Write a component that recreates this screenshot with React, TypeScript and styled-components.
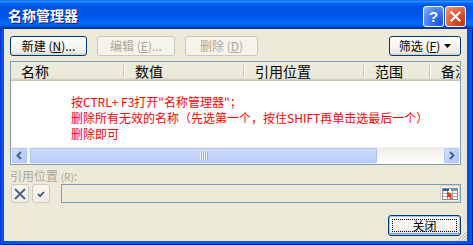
import React from "react";
import styled, { createGlobalStyle } from "styled-components";

const GlobalStyle = createGlobalStyle`
  *, *::before, *::after { box-sizing: border-box; }
  html, body { margin: 0; padding: 0; }
  body {
    width: 473px;
    height: 245px;
    overflow: hidden;
    background: #0054E3;
    font-family: "Noto Sans CJK SC", "Noto Sans", "Liberation Sans", sans-serif;
    font-size: 12px;
  }
`;

const Window = styled.div`
  width: 473px;
  height: 245px;
  display: flex;
  flex-direction: column;
  overflow: hidden;
`;

const TitleBar = styled.div`
  height: 29px;
  flex: none;
  display: flex;
  align-items: flex-start;
  padding: 0 7px 0 8px;
  background: linear-gradient(
    180deg,
    #0058ee 0%,
    #3593ff 4%,
    #288eff 6%,
    #127dff 8%,
    #036ffc 10%,
    #0262ee 14%,
    #0057e5 20%,
    #0054e3 24%,
    #0055eb 56%,
    #005bf5 66%,
    #026afe 76%,
    #0062ef 86%,
    #0052d6 92%,
    #0040ab 94%,
    #003092 100%
  );
`;

const Title = styled.div`
  flex: 1;
  color: #fff;
  font-weight: 700;
  font-size: 14px;
  line-height: 16px;
  padding-top: 7px;
  text-shadow: 1px 1px 0 #0a1883;
  white-space: nowrap;
`;

const CaptionButtons = styled.div`
  display: flex;
  gap: 1px;
  margin-top: 6px;
`;

const CaptionButton = styled.div<{ $variant: "help" | "close" }>`
  width: 21px;
  height: 21px;
  border: 1px solid #fff;
  border-radius: 3px;
  display: flex;
  align-items: center;
  justify-content: center;
  color: #fff;
  font-family: "Liberation Sans", sans-serif;
  font-weight: 700;
  font-size: 15px;
  background: ${(p) =>
    p.$variant === "close"
      ? "radial-gradient(circle at 85% 85%, #c2360f 0%, #da5431 45%, #e9805f 80%, #f4a98f 100%)"
      : "radial-gradient(circle at 85% 85%, #1c52e0 0%, #3b76f0 45%, #6b9bf7 80%, #9cbefb 100%)"};
`;

const Frame = styled.div`
  flex: 1;
  min-height: 0;
  min-width: 0;
  display: flex;
  padding: 0 6px 4px 4px;
  background: #0054e3;
  box-shadow: inset 1px 0 #0831d9, inset -1px 0 #001ea0, inset 0 -1px #001ea0;
`;

const Body = styled.div`
  flex: 1;
  min-width: 0;
  position: relative;
  overflow: hidden;
  background: #ece9d8;
  display: flex;
  flex-direction: column;
  padding: 7px 6px 0 6px;
`;

const Toolbar = styled.div`
  display: flex;
  gap: 10px;
  height: 20px;
  flex: none;
`;

const Spacer = styled.div`
  flex: 1;
`;

const PushButton = styled.button<{ $w: number; $default?: boolean }>`
  width: ${(p) => p.$w}px;
  flex: none;
  height: 100%;
  margin: 0;
  padding: 0;
  position: relative;
  display: flex;
  align-items: center;
  justify-content: center;
  gap: 3px;
  font-family: "Noto Sans CJK SC", "Noto Sans", sans-serif;
  font-size: 12px;
  line-height: 14px;
  color: #000;
  border: 1px solid #003c74;
  border-radius: 3px;
  background: linear-gradient(180deg, #ffffff 0%, #f4f3ee 60%, #eceae2 86%, #d6d0c5 100%);
  box-shadow: ${(p) =>
    p.$default ? "inset 0 0 0 1px #a9c3ee, inset 0 -1px 0 1px #7a9ce0" : "none"};
  white-space: nowrap;

  &:disabled {
    color: #aca899;
    border-color: #c9c7ba;
    background: #f5f4ea;
  }

  u {
    text-decoration: underline;
  }
`;

const FocusRing = styled.span`
  position: absolute;
  inset: 3px;
  border: 1px dotted #000;
  pointer-events: none;
`;

const DropCaret = styled.svg`
  width: 7px;
  height: 4px;
  margin-left: 1px;
`;

const ListView = styled.div`
  margin-top: 5px;
  height: 104px;
  flex: none;
  min-width: 0;
  border: 1px solid #7f9db9;
  background: #fff;
  display: flex;
  flex-direction: column;
  overflow: hidden;
`;

const Header = styled.div`
  height: 19px;
  flex: none;
  min-width: 0;
  display: flex;
  background: #ebeadb;
  box-shadow: inset 0 -1px #cbc7b8, inset 0 -2px #d6d2c2, inset 0 -3px #e2decd;
  overflow: hidden;
  white-space: nowrap;
`;

const HeaderCell = styled.div<{ $w: number; $last?: boolean }>`
  flex: none;
  width: ${(p) => p.$w}px;
  position: relative;
  padding-left: 10px;
  font-size: 14px;
  line-height: 18px;
  color: #000;

  &::after {
    content: "";
    display: ${(p) => (p.$last ? "none" : "block")};
    position: absolute;
    right: 1px;
    top: 3px;
    bottom: 4px;
    width: 1px;
    background: #c7c5b2;
    box-shadow: 1px 0 #fff;
  }
`;

const Content = styled.div`
  flex: 1;
  padding: 13px 0 0 60px;
  color: #ff0000;
  font-size: 12px;
  line-height: 16px;
  white-space: nowrap;
`;

const HScroll = styled.div`
  height: 17px;
  flex: none;
  display: flex;
  background: linear-gradient(180deg, #eeede5 0%, #f3f1ec 25%, #fefefb 100%);
`;

const ScrollArrow = styled.div`
  width: 17px;
  flex: none;
  border: 1px solid #eef3fd;
  border-radius: 2px;
  display: flex;
  align-items: center;
  justify-content: center;
  background: linear-gradient(135deg, #d7e3fd 0%, #c1d3fb 45%, #aec4f7 100%);
  box-shadow: inset 0 0 0 1px #b4c8f6;
`;

const Track = styled.div`
  flex: 1;
  min-width: 0;
  display: flex;
  padding: 0 1px;
`;

const Thumb = styled.div`
  height: 100%;
  flex: none;
  border: 1px solid #eef3fd;
  border-radius: 2px;
  display: flex;
  align-items: center;
  justify-content: center;
  background: linear-gradient(180deg, #cddbfc 0%, #c4d5fc 50%, #b7cbf8 100%);
  box-shadow: inset 0 0 0 1px #b0c5f4;
`;

const Grip = styled.div`
  width: 8px;
  height: 8px;
  background: repeating-linear-gradient(90deg, #eef4fe 0 1px, #8cb0f8 1px 2px);
`;

const RefLabel = styled.div`
  margin-top: 4px;
  height: 14px;
  line-height: 14px;
  color: #aca899;
  font-size: 12px;
  flex: none;
  white-space: nowrap;
`;

const Mnemonic = styled.span`
  font-size: 10px;
`;

const RefRow = styled.div`
  margin-top: 1px;
  height: 19px;
  flex: none;
  display: flex;
  align-items: stretch;
  padding-left: 1px;
`;

const IconButton = styled.div<{ $gap: number }>`
  width: 18px;
  flex: none;
  margin-left: ${(p) => p.$gap}px;
  border: 1px solid #cfcbbd;
  border-radius: 3px;
  background: linear-gradient(180deg, #f8f7f1 0%, #efede4 100%);
  display: flex;
  align-items: center;
  justify-content: center;
`;

const RefField = styled.div`
  flex: 1;
  min-width: 0;
  margin-left: 11px;
  border: 1px solid #7f9db9;
  display: flex;
  justify-content: flex-end;
`;

const RefPicker = styled.div`
  width: 20px;
  border: 1px solid #d8d4c6;
  border-radius: 2px;
  background: #f3f2ea;
  display: flex;
  align-items: center;
  justify-content: center;
`;

const Footer = styled.div`
  margin-top: 12px;
  height: 21px;
  flex: none;
  display: flex;
  justify-content: flex-end;
`;

const SizeGrip = styled.svg`
  position: absolute;
  right: 0;
  bottom: 0;
  width: 12px;
  height: 12px;
`;

const headerCols: { label: string; w: number }[] = [
  { label: "名称", w: 114 },
  { label: "数值", w: 120 },
  { label: "引用位置", w: 120 },
  { label: "范围", w: 66 },
  { label: "备注", w: 100 },
];

export default function App() {
  return (
    <>
      <GlobalStyle />
      <Window>
        <TitleBar>
          <Title>名称管理器</Title>
          <CaptionButtons>
            <CaptionButton $variant="help">?</CaptionButton>
            <CaptionButton $variant="close">
              <svg width="13" height="13" viewBox="0 0 13 13">
                <path d="M2.5 2.5 L10.5 10.5 M10.5 2.5 L2.5 10.5" stroke="#fff" strokeWidth="2.2" strokeLinecap="square" />
              </svg>
            </CaptionButton>
          </CaptionButtons>
        </TitleBar>
        <Frame>
          <Body>
            <Toolbar>
              <PushButton $w={77}>
                <span>
                  新建 (<u>N</u>)...
                </span>
              </PushButton>
              <PushButton $w={78} disabled>
                <span>
                  编辑 (<u>E</u>)...
                </span>
              </PushButton>
              <PushButton $w={73} disabled>
                <span>
                  删除 (<u>D</u>)
                </span>
              </PushButton>
              <Spacer />
              <PushButton $w={72}>
                <span>
                  筛选 (<u>F</u>)
                </span>
                <DropCaret viewBox="0 0 7 4">
                  <polygon points="0,0 7,0 3.5,4" fill="#000" />
                </DropCaret>
              </PushButton>
            </Toolbar>

            <ListView>
              <Header>
                {headerCols.map((c, i) => (
                  <HeaderCell key={c.label} $w={c.w} $last={i === headerCols.length - 1}>
                    {c.label}
                  </HeaderCell>
                ))}
              </Header>
              <Content>
                <div>按CTRL+ F3打开"名称管理器"；</div>
                <div>删除所有无效的名称（先选第一个，按住SHIFT再单击选最后一个）</div>
                <div>删除即可</div>
              </Content>
              <HScroll>
                <ScrollArrow>
                  <svg width="9" height="9" viewBox="0 0 9 9">
                    <path d="M6 1 L2.5 4.5 L6 8" fill="none" stroke="#4d6185" strokeWidth="2" />
                  </svg>
                </ScrollArrow>
                <Track>
                  <Thumb style={{ width: 349 }}>
                    <Grip />
                  </Thumb>
                </Track>
                <ScrollArrow>
                  <svg width="9" height="9" viewBox="0 0 9 9">
                    <path d="M3 1 L6.5 4.5 L3 8" fill="none" stroke="#4d6185" strokeWidth="2" />
                  </svg>
                </ScrollArrow>
              </HScroll>
            </ListView>

            <RefLabel>
              引用位置 <Mnemonic>(R)</Mnemonic>:
            </RefLabel>
            <RefRow>
              <IconButton $gap={0}>
                <svg width="14" height="14" viewBox="0 0 14 14">
                  <path d="M2 2 L12 12 M12 2 L2 12" stroke="#4c5f88" strokeWidth="1.8" />
                </svg>
              </IconButton>
              <IconButton $gap={3}>
                <svg width="12" height="12" viewBox="0 0 12 12">
                  <path d="M3 6 L5 8 L9 4" fill="none" stroke="#2e4a86" strokeWidth="1.7" />
                </svg>
              </IconButton>
              <RefField>
                <RefPicker>
                  <svg width="16" height="12" viewBox="0 0 16 12">
                    <rect x="0.5" y="0.5" width="15" height="11" fill="#fff" stroke="#8a8a8a" />
                    <rect x="1" y="1" width="6" height="2" fill="#2d57c9" />
                    <rect x="9" y="1" width="6" height="2" fill="#7d8fb8" />
                    <path d="M1 5.5 H15 M1 8.5 H15 M5.5 3 V11 M10.5 3 V11" stroke="#a8a8a8" strokeWidth="1" />
                    <polygon points="5,3 5,10 7,8.5 8.5,11.5 10,10.8 8.6,7.8 11,7.6" fill="#e63a1f" />
                  </svg>
                </RefPicker>
              </RefField>
            </RefRow>

            <Footer>
              <PushButton $w={73} $default>
                <FocusRing />
                <span>关闭</span>
              </PushButton>
            </Footer>

            <SizeGrip viewBox="0 0 12 12">
              <path d="M11 2 L2 11 M11 5 L5 11 M11 8 L8 11" stroke="#fff" strokeWidth="1" />
              <path d="M11.5 3 L3 11.5 M11.5 6 L6 11.5 M11.5 9 L9 11.5" stroke="#aca899" strokeWidth="1" />
            </SizeGrip>
          </Body>
        </Frame>
      </Window>
    </>
  );
}
